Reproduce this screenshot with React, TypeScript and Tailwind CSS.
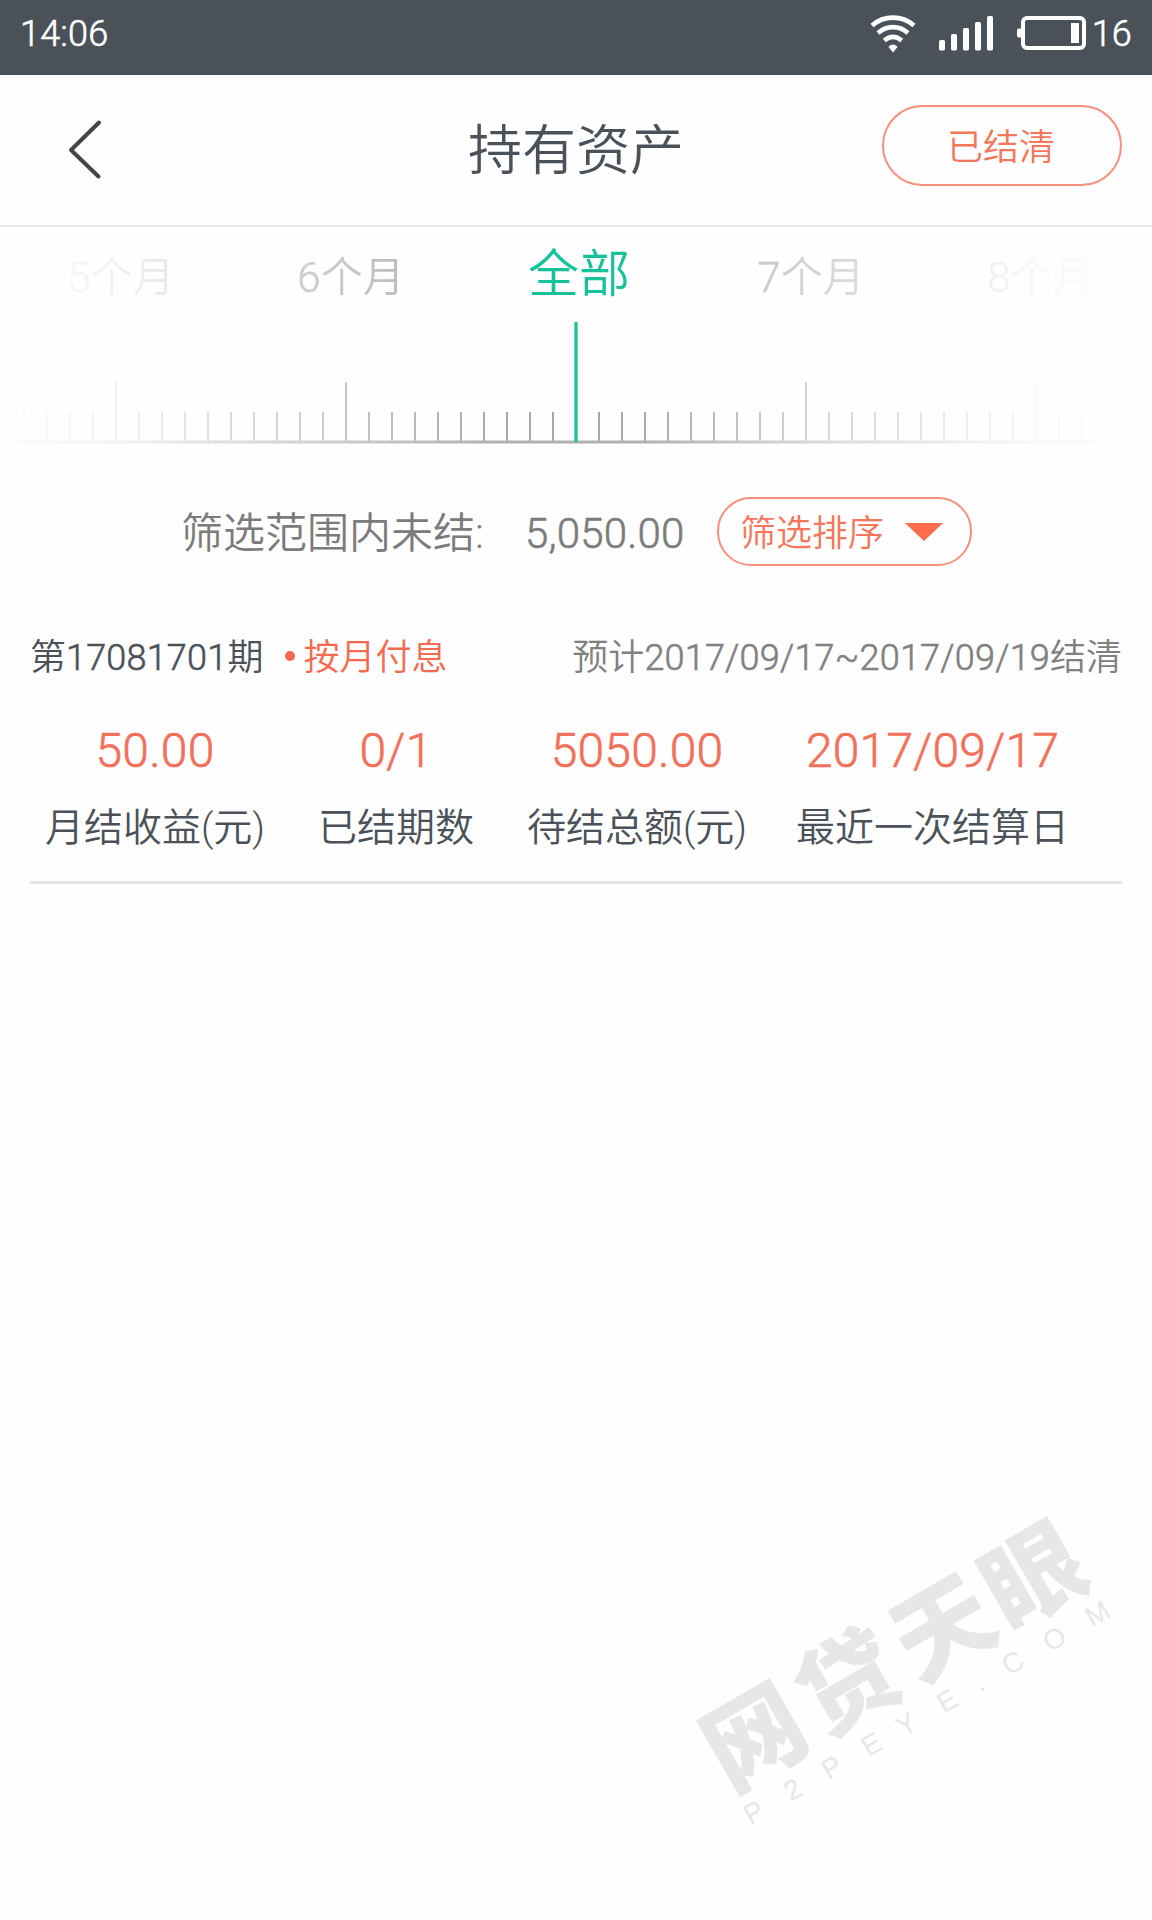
import { useState } from 'react'
import type { ReactNode } from 'react'

const months = ['5个月', '6个月', '全部', '7个月', '8个月']

const stats = [
  { value: '50.00', label: '月结收益(元)', box: 'ml-[14px] w-[222px]' },
  { value: '0/1', label: '已结期数', box: 'ml-[52px] w-[156px]' },
  { value: '5050.00', label: '待结总额(元)', box: 'ml-[52px] w-[222px]' },
  { value: '2017/09/17', label: '最近一次结算日', box: 'ml-[48px] w-[273px]' },
]

// digits sit a bit heavier than the light cut of the font
function Num({ children }: { children: ReactNode }) {
  return <span className="tracking-[0.2px] [-webkit-text-stroke:0.6px_currentColor]">{children}</span>
}

function StatusBar() {
  return (
    <div className="flex h-[75px] items-center justify-between bg-[#4b5159] pr-5 pb-2 pl-5 text-[36px] leading-none text-white">
      <Num>14:06</Num>
      <div className="flex items-center">
        <svg width="46" height="40" viewBox="0 0 46 40" fill="none" stroke="#fff" strokeWidth="4.6">
          <path d="M2 11.500 C14 1 32 1 44 11.500" />
          <path d="M8 19 C17 11.200 29 11.200 38 19" />
          <path d="M14.300 26.600 C20 21.600 26 21.600 31.700 26.600" />
          <path d="M18.500 33 C20.500 29.500 25.500 29.500 27.500 33 L23 38.500 Z" fill="#fff" stroke="none" />
        </svg>
        <svg className="ml-[23px]" width="54" height="36" viewBox="0 0 54 36" fill="#fff">
          <rect x="0" y="24" width="6" height="10.500" rx="1.500" />
          <rect x="12" y="18" width="6" height="16.500" rx="1.500" />
          <rect x="24" y="12" width="6" height="22.500" rx="1.500" />
          <rect x="36" y="6" width="6" height="28.500" rx="1.500" />
          <rect x="48" y="0" width="6" height="34.500" rx="1.500" />
        </svg>
        <svg className="ml-6" width="69" height="36" viewBox="0 0 69 36" fill="none">
          <rect x="6" y="2" width="61" height="30" rx="4" stroke="#fff" strokeWidth="4" />
          <rect x="0" y="12.500" width="6" height="9" rx="2" fill="#fff" />
          <rect x="54" y="7" width="8" height="20" fill="#fff" />
        </svg>
        <span className="ml-[6px]">
          <Num>16</Num>
        </span>
      </div>
    </div>
  )
}

function Header() {
  return (
    <header className="grid h-[152px] grid-cols-[1fr_auto_1fr] items-center border-b-2 border-[#e9e9e9]">
      <button className="ml-[65px] justify-self-start">
        <svg width="38" height="62" viewBox="0 0 38 62" fill="none" stroke="#444" strokeWidth="4" strokeLinecap="round" strokeLinejoin="round">
          <path d="M34 3.500 L6 31 L33.500 57.500" />
        </svg>
      </button>
      <h1 className="pt-[3px] text-[54px] leading-none text-[#4b5159]">持有资产</h1>
      <button className="mr-[30px] mb-[9px] flex h-[81px] w-[240px] items-center justify-center justify-self-end rounded-full border-2 border-[#f5907c] pt-1 pr-[2px] text-[36px] leading-none text-[#f5765d]">
        已结清
      </button>
    </header>
  )
}

function Ruler() {
  const [active, setActive] = useState('全部')
  const ticks = Array.from({ length: 51 }, (_, i) => i - 25)

  return (
    <section className="[mask-image:linear-gradient(to_right,rgb(0_0_0/0.02),rgb(0_0_0/0.14)_116px,rgb(0_0_0/0.66)_346px,#000_500px,#000_635px,rgb(0_0_0/0.5)_806px,rgb(0_0_0/0.07)_1036px,transparent)]">
      <div className="flex h-[95px] items-center">
        {months.map((m) => (
          <button
            key={m}
            onClick={() => setActive(m)}
            className={
              m === active
                ? 'w-[230px] pl-2 text-center text-[51px] leading-none text-[#17c29a]'
                : 'w-[230px] pt-[6px] pl-3 text-center text-[42px] leading-none text-[#aaa]'
            }
          >
            {m === active ? (
              m
            ) : (
              <>
                <Num>{m[0]}</Num>
                {m.slice(1)}
              </>
            )}
          </button>
        ))}
      </div>
      <svg width="1152" height="122" viewBox="0 0 1152 122">
        {ticks.map((t) => (
          <rect key={t} x={575 + t * 23} y={t % 10 === 0 ? 60 : 90} width="2" height={t % 10 === 0 ? 60 : 30} fill="#a8a8a8" />
        ))}
        <rect x="0" y="118.500" width="1152" height="3" fill="#b0b0b0" />
        <rect x="574.300" y="0" width="3.400" height="120" fill="#1fc39b" />
      </svg>
    </section>
  )
}

function FilterRow() {
  return (
    <div className="flex h-[69px] items-center pl-[181px] text-[42px] leading-none text-[#7b7b7b]">
      <span className="w-[344px] pt-[5px]">筛选范围内未结:</span>
      <span className="w-[192px] pt-[5px]">
        <Num>5,050.00</Num>
      </span>
      <button className="flex h-[69px] w-[255px] items-center rounded-[34px] border-2 border-[#f5907c] pl-[21px] text-[36px] text-[#f5765d]">
        <span className="pt-1">筛选排序</span>
        <svg className="ml-[21px]" width="38" height="18" viewBox="0 0 38 18" fill="#ff6d4d">
          <path d="M0 0 H38 L19 18 Z" />
        </svg>
      </button>
    </div>
  )
}

function AssetItem() {
  return (
    <article className="mx-[30px] border-b-[3px] border-[#e5e5e5] pb-[23px]">
      <div className="flex items-center text-[36px] leading-[48px]">
        <span className="text-[#4b5159]">
          第<Num>17081701</Num>期
        </span>
        <i className="mb-1 ml-[22px] h-[10px] w-[10px] rounded-full bg-[#f56a4f]" />
        <span className="ml-2 text-[#f56a4f]">按月付息</span>
        <span className="ml-auto text-[#808080]">
          预计<Num>2017/09/17~2017/09/19</Num>结清
        </span>
      </div>
      <div className="mt-[39px] flex">
        {stats.map((s) => (
          <div key={s.label} className={`${s.box} text-center whitespace-nowrap`}>
            <p className="text-[48px] leading-[60px] text-[#f1705a]">
              <Num>{s.value}</Num>
            </p>
            <p className="mt-[17px] text-[39px] leading-[60px] text-[#4b5159]">{s.label}</p>
          </div>
        ))}
      </div>
    </article>
  )
}

function Watermark() {
  return (
    <svg className="pointer-events-none absolute top-[1490px] left-[670px]" width="482" height="350" fill="#e7e7e7">
      <g transform="translate(24.700 231.700) rotate(-30)">
        <text x="44 152 262 366" y="79" textAnchor="middle" fontSize="99" fontWeight="900">网贷天眼</text>
        <text x="6 51 96 142 182 229 266 305 353 403" y="117.500" textAnchor="middle" fontSize="28" fontFamily="Liberation Sans, sans-serif">P2PEYE.COM</text>
      </g>
    </svg>
  )
}

export default function App() {
  return (
    <div className="relative min-h-[1920px] w-[1152px] overflow-hidden bg-[#fefefe] font-['Roboto','Noto_Sans_CJK_SC',sans-serif] font-[350] [&_button]:font-[350]">
      <StatusBar />
      <Header />
      <Ruler />
      <div className="h-[53px]" />
      <FilterRow />
      <div className="h-[68px]" />
      <AssetItem />
      <Watermark />
    </div>
  )
}
